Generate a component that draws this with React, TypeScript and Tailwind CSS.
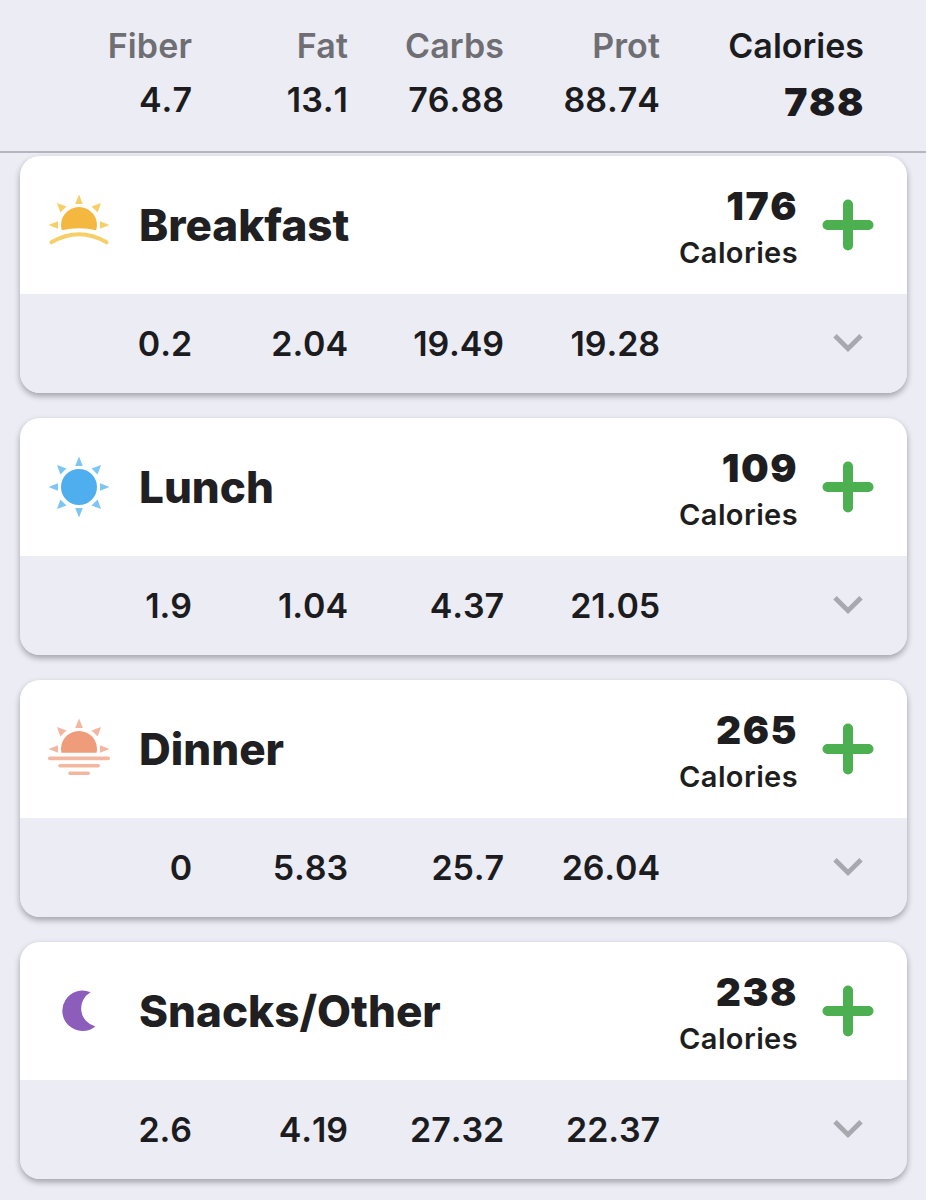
import React from 'react';

interface Meal {
  name: string;
  calories: number;
  macros: string[];
  icon: React.ReactNode;
}

const Rays: React.FC<{ angles: number[] }> = ({ angles }) => (
  <>
    {angles.map((a) => (
      <path key={a} d="M32 1.5 L35.8 11 H28.2 Z" transform={`rotate(${a} 32 32)`} />
    ))}
  </>
);

// Diagonal rays sit slightly further out than the straight ones
const DiagonalRays: React.FC<{ angles: number[] }> = ({ angles }) => (
  <>
    {angles.map((a) => (
      <path key={a} d="M32 0.8 L36.3 10 H27.7 Z" transform={`rotate(${a} 32 32)`} />
    ))}
  </>
);

const SunriseIcon = () => (
  <svg viewBox="0 0 64 64" className="w-16 h-16" fill="#f7cf69">
    <Rays angles={[-90, 0, 90]} />
    <DiagonalRays angles={[-45, 45]} />
    <path d="M14.8 37.3 A18 18 0 1 1 49.2 37.3 Q32 33 14.8 37.3 Z" fill="#f4b840" />
    <path d="M4.5 49.3 Q32 33.3 59.5 49.3" fill="none" stroke="#f7cf69" strokeWidth="4" strokeLinecap="round" />
  </svg>
);

const SunIcon = () => (
  <svg viewBox="0 0 64 64" className="w-16 h-16" fill="#7cc6f5">
    <Rays angles={[0, 90, 180, 270]} />
    <DiagonalRays angles={[45, 135, 225, 315]} />
    <circle cx="32" cy="32" r="18" fill="#4faeee" />
  </svg>
);

const SunsetIcon = () => (
  <svg viewBox="0 0 64 64" className="w-16 h-16" fill="#f3b6a0">
    <Rays angles={[-90, 0, 90]} />
    <DiagonalRays angles={[-45, 45]} />
    <path d="M14.4 35.7 A18 18 0 1 1 49.6 35.7 Z" fill="#ef9c7b" />
    <path d="M2.8 41.4 H61.2 M13 48.8 H51.2 M23 56.3 H41.2" stroke="#f3b6a0" strokeWidth="3.6" strokeLinecap="round" />
  </svg>
);

const MoonIcon = () => (
  <svg viewBox="0 0 64 64" className="w-16 h-16" fill="#8c5dba">
    <path d="M43.5 13.2 A20.2 20.2 0 1 0 48.3 47.4 A18.6 18.6 0 0 1 43.5 13.2 Z" />
  </svg>
);

const MEALS: Meal[] = [
  { name: 'Breakfast', calories: 176, macros: ['0.2', '2.04', '19.49', '19.28'], icon: <SunriseIcon /> },
  { name: 'Lunch', calories: 109, macros: ['1.9', '1.04', '4.37', '21.05'], icon: <SunIcon /> },
  { name: 'Dinner', calories: 265, macros: ['0', '5.83', '25.7', '26.04'], icon: <SunsetIcon /> },
  { name: 'Snacks/Other', calories: 238, macros: ['2.6', '4.19', '27.32', '22.37'], icon: <MoonIcon /> },
];

const TOTALS = [
  { label: 'Fiber', value: '4.7' },
  { label: 'Fat', value: '13.1' },
  { label: 'Carbs', value: '76.88' },
  { label: 'Prot', value: '88.74' },
];

const MealCard: React.FC<{ meal: Meal }> = ({ meal }) => (
  <section className="rounded-[20px] overflow-hidden shadow-[0_3px_6px_rgba(0,0,0,0.32)]">
    <div className="h-[138px] bg-white flex items-center pl-[27px] pr-[33px]">
      {meal.icon}
      <h2 className="ml-[28px] flex-1 text-[44px] leading-none font-extrabold text-[#202022]">{meal.name}</h2>
      <div className="flex flex-col items-end pt-[9px]">
        <span className="text-[39px] leading-[46px] font-black tracking-[1.5px] [font-kerning:none] text-[#1e1e20]">{meal.calories}</span>
        <span className="text-[29px] leading-[47px] font-semibold tracking-[0.4px] text-[#1e1e20]">Calories</span>
      </div>
      <button className="ml-[24px]" aria-label={`Add to ${meal.name}`}>
        <svg viewBox="0 0 52 52" className="w-[52px] h-[52px]">
          <path d="M26 5.5 V46.5 M5.5 26 H46.5" stroke="#4caf50" strokeWidth="10" strokeLinecap="round" />
        </svg>
      </button>
    </div>
    <div className="h-[99px] bg-[#ebecf4] flex items-center">
      <div className="grid grid-cols-[repeat(4,156px)] ml-[16px] text-right text-[34px] leading-none font-semibold tracking-[-0.1px] [font-kerning:none] text-[#1c1c20]">
        {meal.macros.map((m, i) => (
          <span key={i}>{m}</span>
        ))}
      </div>
      <svg viewBox="0 0 30 20" className="w-[30px] h-[20px] ml-auto mr-[44px]">
        <path d="M2 1.7 L15 14.7 L28 1.7" fill="none" stroke="#a8a9af" strokeWidth="4.8" />
      </svg>
    </div>
  </section>
);

export default function App() {
  return (
    <div className="w-[926px] h-[1200px] overflow-hidden bg-[#ebecf4] font-['Inter',sans-serif]">
      <header className="h-[153px] border-b-2 border-[#b5b5bf] pl-[36px] pt-[18px] grid grid-cols-[156px_156px_156px_156px_204px] items-start text-right text-[34px] font-semibold text-[#1c1c20]">
        {TOTALS.map((t) => (
          <div key={t.label} className="flex flex-col">
            <span className="leading-[55px] tracking-[0.1px] text-[#6e6e73]">{t.label}</span>
            <span className="leading-[54px] [font-kerning:none]">{t.value}</span>
          </div>
        ))}
        <div className="flex flex-col">
          <span className="leading-[55px]">Calories</span>
          <span className="-mr-[1px] text-[39px] leading-[57px] font-black tracking-[1.5px] [font-kerning:none]">788</span>
        </div>
      </header>
      <main className="pl-[20px] pr-[19px] pt-[3px] flex flex-col gap-[25px]">
        {MEALS.map((meal) => (
          <MealCard key={meal.name} meal={meal} />
        ))}
      </main>
    </div>
  );
}
